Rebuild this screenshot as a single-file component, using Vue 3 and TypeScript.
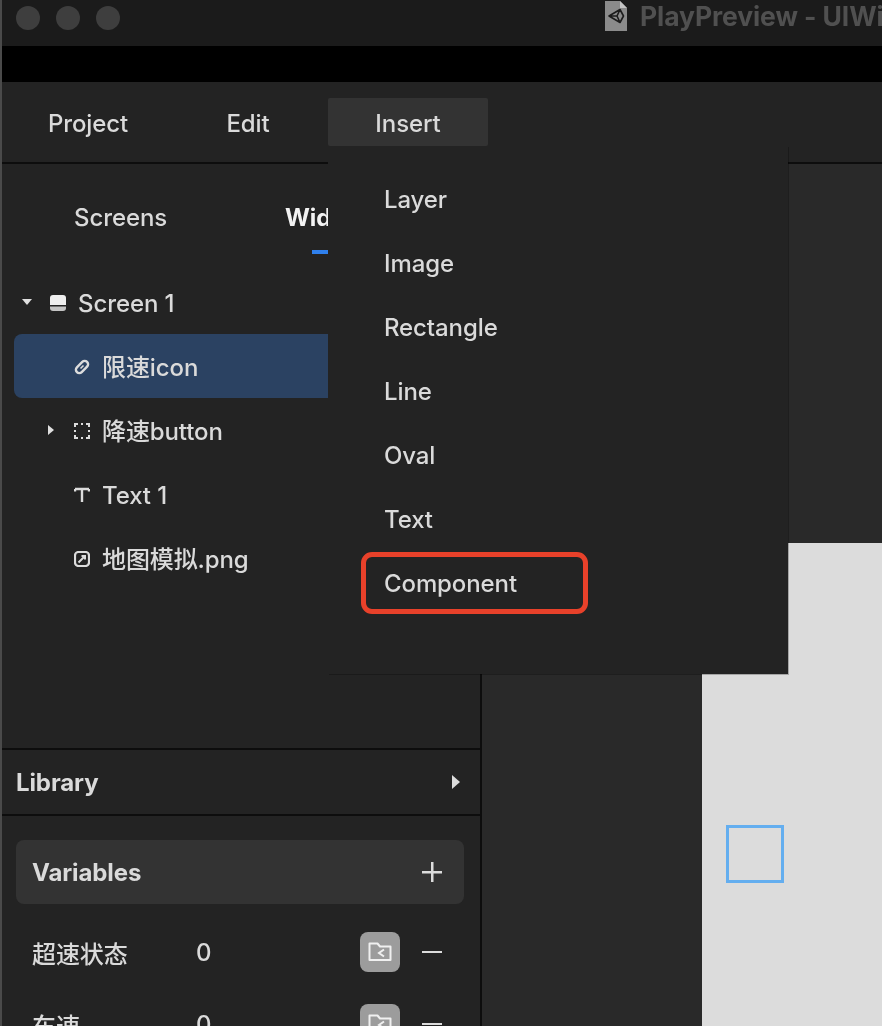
<script setup lang="ts">
const menus = ['Project', 'Edit', 'Insert']
const inserts = ['Layer', 'Image', 'Rectangle', 'Line', 'Oval', 'Text', 'Component']

const layers = [
  { name: '限速icon', icon: 'link', selected: true, arrow: false },
  { name: '降速button', icon: 'group', selected: false, arrow: true },
  { name: 'Text 1', icon: 'text', selected: false, arrow: false },
  { name: '地图模拟.png', icon: 'image', selected: false, arrow: false }
]

const variables = [
  { name: '超速状态', value: 0 },
  { name: '车速', value: 0 }
]
</script>

<template>
  <div class="window">
    <header class="titlebar">
      <div class="lights">
        <span class="light"></span>
        <span class="light"></span>
        <span class="light"></span>
      </div>
      <div class="title">
        <svg class="doc" width="22" height="30" viewBox="0 0 22 30">
          <path d="M0 0H15L22 7V30H0Z" fill="#8b8b8b" />
          <path d="M15 0L22 7H15Z" fill="#c4c4c4" />
          <path
            d="M4 15L15 8.5L18.5 15L15 21.5ZM4 15H12M15 8.5L12 15L15 21.5"
            fill="none"
            stroke="#1c1c1c"
            stroke-width="1.6"
            stroke-linejoin="round"
          />
        </svg>
        <span>PlayPreview - UIWidgets</span>
      </div>
    </header>
    <div class="blackbar"></div>

    <nav class="menubar">
      <div
        v-for="menu in menus"
        :key="menu"
        class="menu"
        :class="{ 'menu--open': menu === 'Insert' }"
      >
        {{ menu }}
      </div>
      <ul class="dropdown">
        <li v-for="item in inserts" :key="item" class="dropdown__item">
          {{ item }}
          <span v-if="item === 'Component'" class="callout"></span>
        </li>
      </ul>
    </nav>

    <main class="body">
      <aside class="sidebar">
        <div class="tabs">
          <div class="tab">Screens</div>
          <div class="tab tab--active">Widgets</div>
        </div>

        <div class="tree">
          <div class="row row--screen">
            <svg class="caret" width="10" height="6" viewBox="0 0 10 6">
              <path d="M0 0H10L5 6Z" fill="#e0e0e0" />
            </svg>
            <svg class="screen-icon" width="16" height="16" viewBox="0 0 16 16">
              <path d="M3 0H13A3 3 0 0 1 16 3V10H0V3A3 3 0 0 1 3 0Z" fill="#efefef" />
              <path d="M0 11.5H16V13A3 3 0 0 1 13 16H3A3 3 0 0 1 0 13Z" fill="#c4c4c4" />
            </svg>
            <span>Screen 1</span>
          </div>
          <div
            v-for="layer in layers"
            :key="layer.name"
            class="row"
            :class="{ 'row--selected': layer.selected }"
          >
            <svg v-if="layer.arrow" class="arrow" width="6" height="10" viewBox="0 0 6 10">
              <path d="M0 0L6 5L0 10Z" fill="#e0e0e0" />
            </svg>
            <svg class="layer-icon" width="16" height="16" viewBox="0 0 16 16" fill="none" stroke="#dcdcdc">
              <g v-if="layer.icon === 'link'" stroke-width="2.4">
                <rect x="0.8" y="4.6" width="14.4" height="6.8" rx="3.4" transform="rotate(-45 8 8)" />
                <path d="M6.5 9.5L9.5 6.5" stroke-width="1.6" />
              </g>
              <g v-else-if="layer.icon === 'group'" stroke-width="2">
                <path d="M0 1H4M7 1H9M12 1H16M1 0V4M1 7V9M1 12V16M15 0V4M15 7V9M15 12V16M0 15H4M7 15H9M12 15H16" />
              </g>
              <g v-else-if="layer.icon === 'text'" stroke-width="2.4">
                <path d="M1 2H15M8 2V15M1 2V4.5M15 2V4.5" />
              </g>
              <g v-else stroke-width="2.2">
                <rect x="1" y="1" width="14" height="14" rx="3.5" />
                <path d="M4.5 11.5L11 5M7.5 5H11V8.5" stroke-width="2" />
              </g>
            </svg>
            <span class="row__name">{{ layer.name }}</span>
          </div>
        </div>

        <section class="library">
          <strong>Library</strong>
          <svg width="8" height="14" viewBox="0 0 8 14">
            <path d="M0 0L8 7L0 14Z" fill="#dcdcdc" />
          </svg>
        </section>

        <section class="vars">
          <div class="vars__head">
            <strong>Variables</strong>
            <span class="plus"></span>
          </div>
          <div v-for="item in variables" :key="item.name" class="var">
            <span class="var__name">{{ item.name }}</span>
            <span class="var__value">{{ item.value }}</span>
            <button type="button" class="var__bind">
              <svg width="24" height="22" viewBox="0 0 24 22" fill="none" stroke="#f0f0f0" stroke-width="2">
                <path d="M1.5 19V2.5H9.5L12 5.5H22.5V19Z" stroke-linejoin="round" />
                <path d="M16 8.5L11 12L16 15.5" />
              </svg>
            </button>
            <span class="minus"></span>
          </div>
        </section>
      </aside>

      <section class="canvas">
        <div class="page">
          <div class="marker"></div>
        </div>
      </section>
    </main>
  </div>
</template>

<style scoped>
.window {
  position: relative;
  width: 882px;
  height: 1026px;
  overflow: hidden;
  display: flex;
  flex-direction: column;
  border-left: 2px solid #4a4a4a;
  box-sizing: border-box;
  background: #232323;
  color: #dadada;
  font-family: Inter, 'Noto Sans CJK SC', sans-serif;
  font-size: 24px;
  font-weight: 500;
  letter-spacing: -0.1px;
  filter: blur(0.5px);
}
.titlebar {
  height: 46px;
  flex: none;
  display: flex;
  background: #1b1b1b;
}
.lights {
  display: flex;
  gap: 16px;
  padding: 6px 0 0 14px;
}
.light {
  width: 24px;
  height: 24px;
  border-radius: 50%;
  background: #3e3e3e;
}
.title {
  display: flex;
  gap: 13px;
  margin-left: 485px;
  height: 32px;
  align-items: center;
  white-space: nowrap;
  color: #505050;
  font-weight: 700;
  font-size: 26.5px;
}
.doc {
  flex: none;
  margin-top: -1px;
}
.blackbar {
  height: 36px;
  flex: none;
  background: #000;
}
.menubar {
  position: relative;
  height: 80px;
  flex: none;
  display: flex;
  background: #232323;
  border-bottom: 2px solid #0d0d0d;
  box-sizing: content-box;
}
.menu {
  width: 160px;
  height: 48px;
  margin-top: 16px;
  line-height: 52px;
  text-align: center;
  border-radius: 2px;
}
.menu:first-child {
  margin-left: 6px;
}
.menu--open {
  background: #333;
}
.dropdown {
  position: absolute;
  z-index: 2;
  top: 64px;
  left: 326px;
  width: 460px;
  height: 528px;
  margin: 0;
  padding: 21px 0 0;
  box-sizing: border-box;
  list-style: none;
  background: #232323;
  box-shadow: 1px 1px 0 rgba(0, 0, 0, 0.25);
}
.dropdown__item {
  position: relative;
  height: 64px;
  padding-left: 56px;
  line-height: 66px;
}
.callout {
  position: absolute;
  top: 1px;
  left: 33px;
  width: 227px;
  height: 62px;
  box-sizing: border-box;
  border: 5px solid #e8412a;
  border-radius: 11px;
}
.body {
  flex: 1;
  min-height: 0;
  display: flex;
}
.sidebar {
  width: 478px;
  flex: none;
  display: flex;
  flex-direction: column;
  border-right: 2px solid #0d0d0d;
  background: #232323;
}
.tabs {
  display: flex;
  gap: 118px;
  height: 90px;
  padding-left: 72px;
  flex: none;
}
.tab {
  position: relative;
  height: 90px;
  line-height: 108px;
}
.tab--active {
  font-weight: 700;
  color: #f2f2f2;
}
.tab--active::after {
  content: '';
  position: absolute;
  left: 27px;
  bottom: 0;
  width: 40px;
  height: 4px;
  background: #2f80ed;
}
.tree {
  height: 494px;
  flex: none;
  box-sizing: border-box;
  padding: 16px 0 0 12px;
}
.row {
  position: relative;
  height: 64px;
  display: flex;
  align-items: center;
  padding-left: 60px;
  gap: 12px;
  border-radius: 8px 0 0 8px;
  line-height: 66px;
}
.row--screen {
  padding-left: 8px;
  gap: 18px;
}
.row--screen span {
  margin: 4px 0 0 -6px;
}
.row__name {
  height: 64px;
  margin-top: 2px;
}
.row--selected {
  background: #2b4262;
}
.caret {
  flex: none;
}
.screen-icon {
  flex: none;
  margin-top: 2px;
}
.arrow {
  position: absolute;
  left: 34px;
  top: 27px;
}
.layer-icon {
  flex: none;
  margin-top: 1px;
}
.library {
  height: 64px;
  flex: none;
  display: flex;
  align-items: center;
  justify-content: space-between;
  padding: 0 20px 0 14px;
  border-top: 2px solid #0d0d0d;
  border-bottom: 2px solid #0d0d0d;
}
.vars {
  padding: 24px 16px 0 14px;
}
.vars__head {
  height: 64px;
  margin-bottom: 12px;
  display: flex;
  align-items: center;
  justify-content: space-between;
  padding: 0 22px 0 16px;
  border-radius: 8px;
  background: #333;
}
.plus {
  position: relative;
  width: 20px;
  height: 20px;
  background:
    linear-gradient(#dcdcdc, #dcdcdc) center / 100% 2.5px no-repeat,
    linear-gradient(#dcdcdc, #dcdcdc) center / 2.5px 100% no-repeat;
}
.var {
  height: 72px;
  display: flex;
  align-items: center;
  padding-left: 16px;
}
.var__name {
  width: 164px;
}
.var__value {
  width: 164px;
}
.var__bind {
  width: 40px;
  height: 40px;
  padding: 0;
  border: none;
  border-radius: 8px;
  background: #9c9c9c;
  display: flex;
  align-items: center;
  justify-content: center;
}
.minus {
  width: 20px;
  height: 2.5px;
  margin-left: 22px;
  background: #dcdcdc;
}
.canvas {
  flex: 1;
  min-width: 0;
  background: #292929;
  padding: 379px 0 0 220px;
}
.page {
  position: relative;
  height: 100%;
  background: #dcdcdc;
}
.marker {
  position: absolute;
  left: 24px;
  top: 282px;
  width: 58px;
  height: 58px;
  box-sizing: border-box;
  border: 3px solid #64aeef;
}
</style>

<style>
html,
body {
  background: #232323;
}
</style>
